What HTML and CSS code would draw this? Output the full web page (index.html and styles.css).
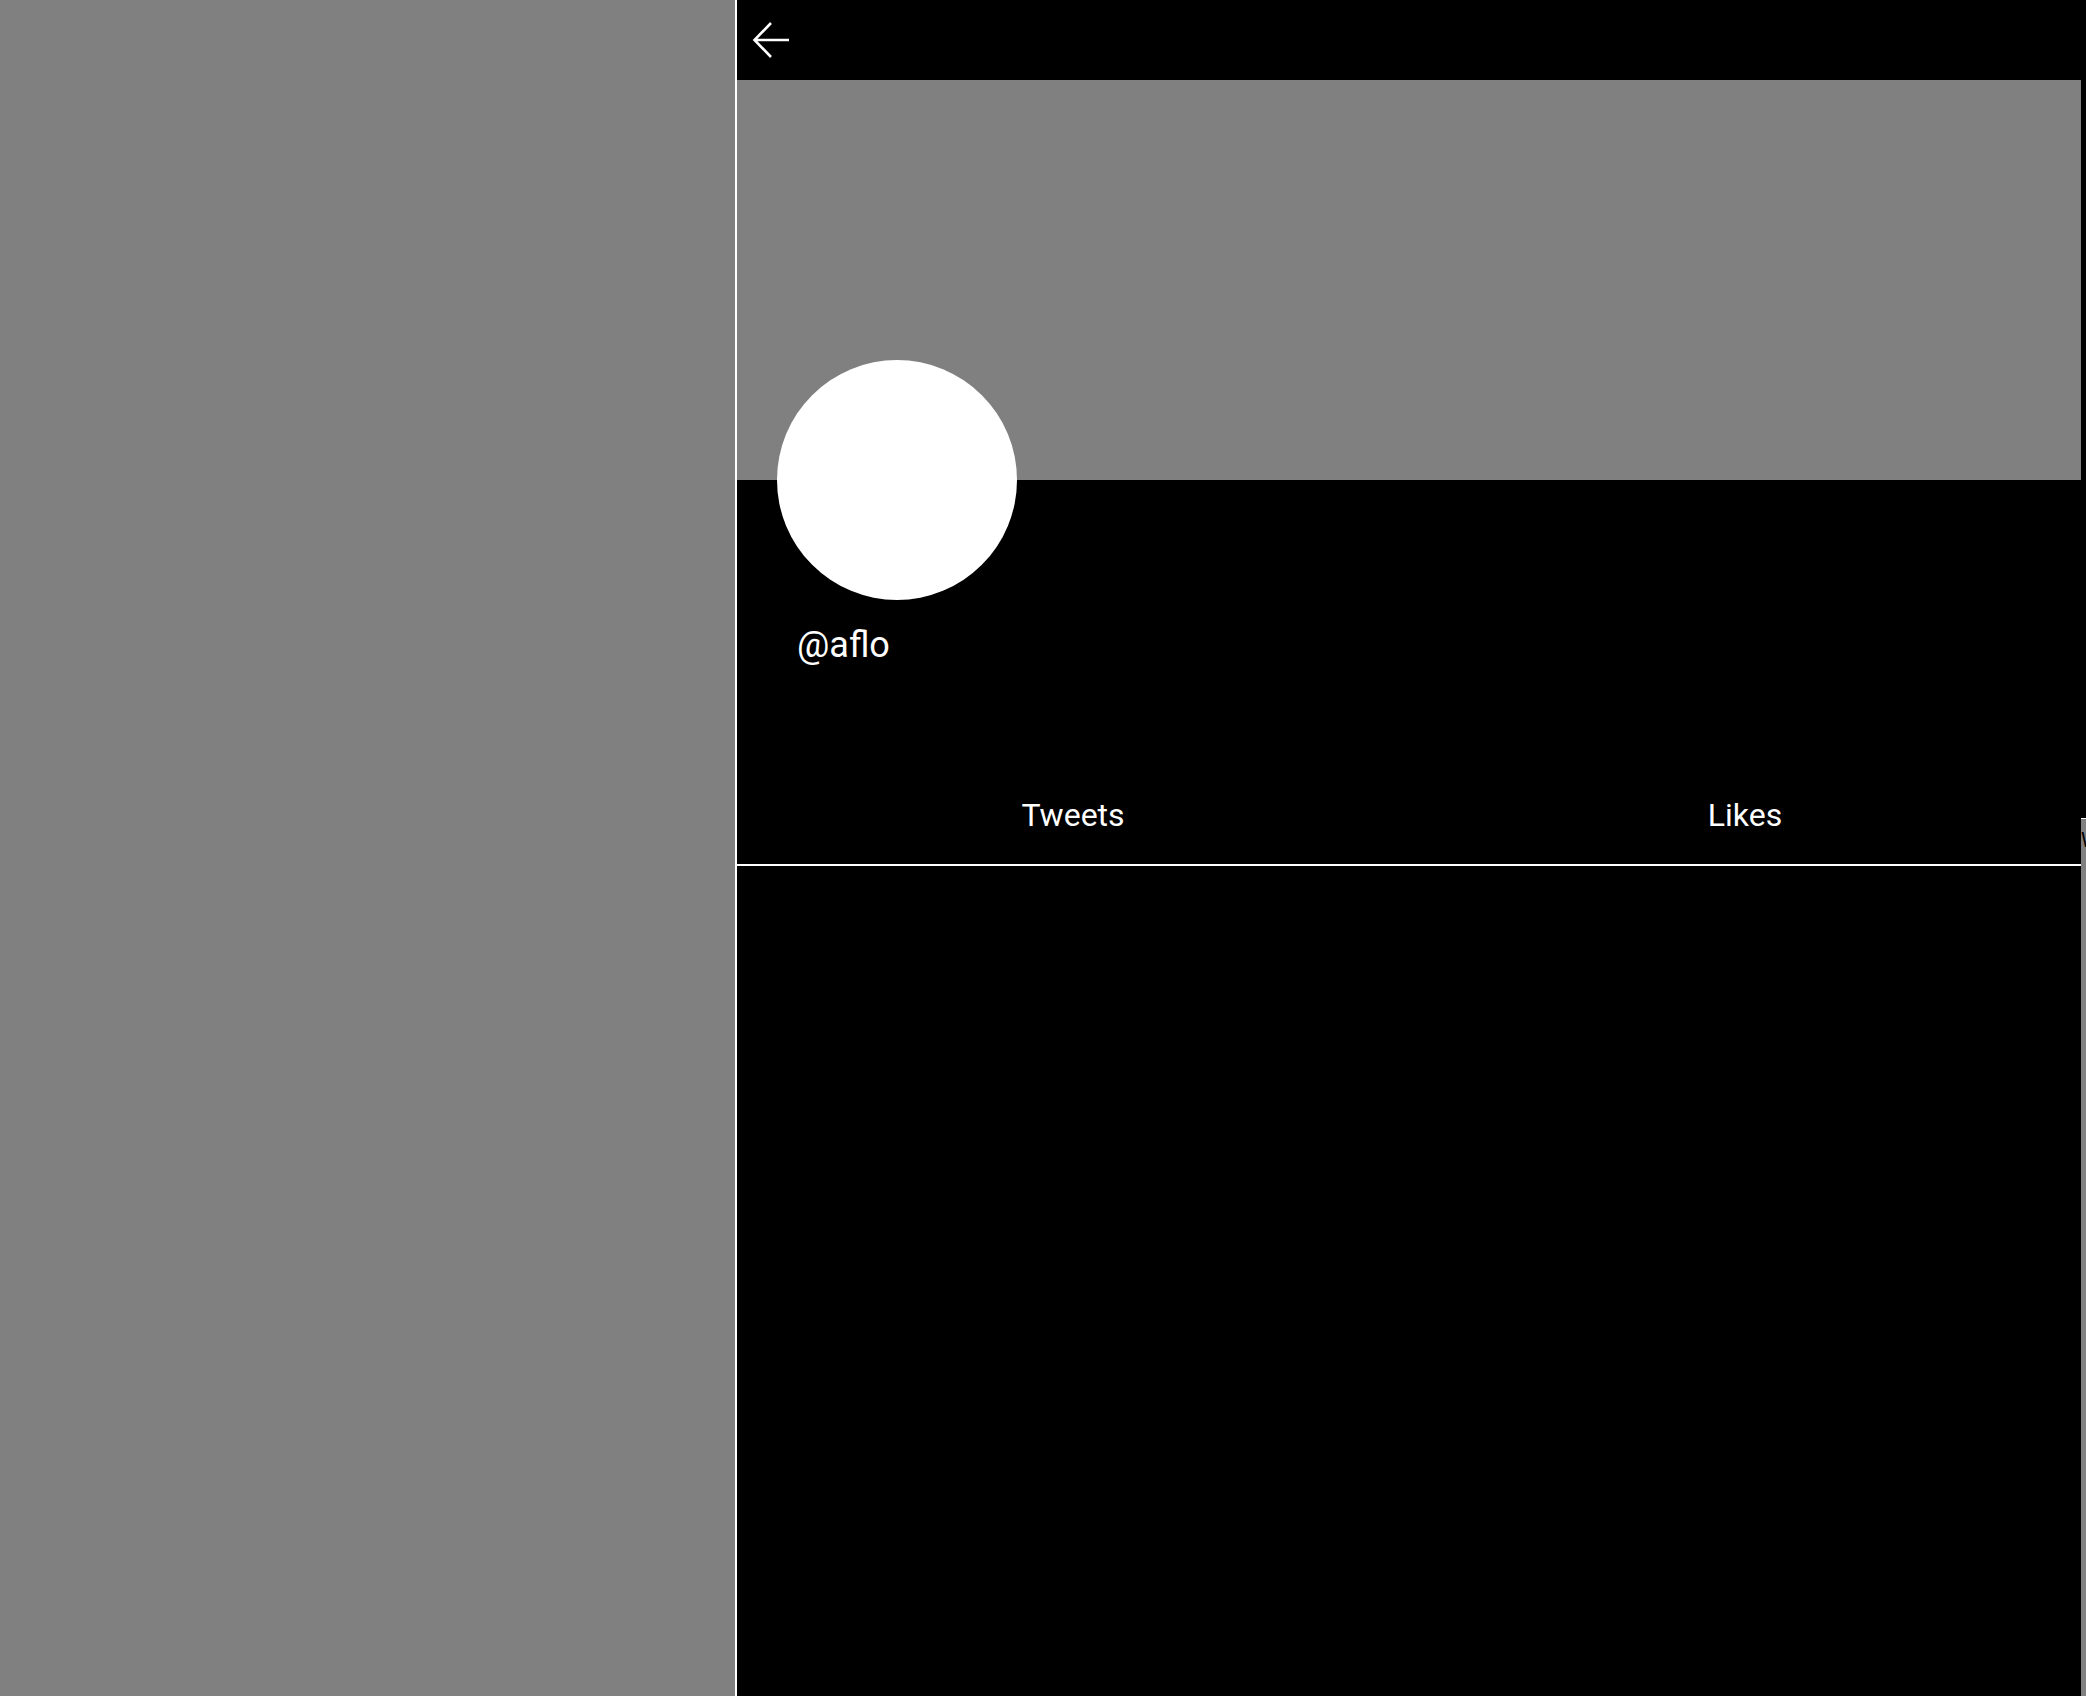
FILE: index.html
```html
<!DOCTYPE html>
<html lang="en">
<head>
<meta charset="utf-8">
<title>@aflo</title>
<link rel="stylesheet" href="styles.css">
</head>
<body>
<div class="app">
  <aside class="sidebar"></aside>
  <main class="main">
    <div class="column">
      <header class="topbar">
        <button class="back" aria-label="Back">
          <svg width="40" height="40" viewBox="0 0 40 40" fill="none" stroke="#fff" stroke-width="2.6" stroke-linecap="butt" stroke-linejoin="miter">
            <path d="M37 20 H3.5"/>
            <path d="M19 3 L2.5 20 L19 37"/>
          </svg>
        </button>
      </header>
      <div class="banner"></div>
      <div class="profile">
        <div class="avatar"></div>
        <div class="handle">@aflo</div>
      </div>
      <nav class="tabs">
        <div class="tab">Tweets</div>
        <div class="tab">Likes</div>
      </nav>
    </div>
  </main>
  <aside class="trends">
    <div class="trends-title">What's happening</div>
  </aside>
</div>
</body>
</html>
```

FILE: styles.css
```css
html, body {
  margin: 0;
  padding: 0;
  height: 100%;
  overflow: hidden;
  background: #000;
}

body {
  font-family: Roboto, "Noto Sans", "Liberation Sans", sans-serif;
  color: #fff;
}

.app {
  display: flex;
  height: 100vh;
  position: relative;
}

.sidebar {
  width: 735px;
  flex: none;
  background: #808080;
}

.main {
  flex: 1;
  background: #000;
  border-left: 2px solid #fff;
  min-width: 0;
}

.column {
  width: 1344px;
}

.topbar {
  height: 80px;
  display: flex;
  align-items: center;
  padding-left: 15px;
}

.back {
  background: none;
  border: 0;
  padding: 0;
  margin: 0;
  width: 40px;
  height: 40px;
  display: block;
  cursor: pointer;
}

.back svg {
  display: block;
}

.banner {
  height: 400px;
  background: #808080;
}

.profile {
  padding-left: 40px;
}

.avatar {
  width: 240px;
  height: 240px;
  border-radius: 50%;
  background: #fff;
  margin-top: -120px;
}

.handle {
  margin-top: 27px;
  padding-left: 20px;
  font-size: 36px;
  line-height: 36px;
}

.tabs {
  display: flex;
  margin-top: 103px;
  border-bottom: 2px solid #fff;
}

.tab {
  flex: 1;
  text-align: center;
  font-size: 32px;
  line-height: 32px;
  padding: 33px 0;
}

.trends {
  position: absolute;
  left: 2081px;
  top: 818px;
  bottom: 0;
  width: 5px;
  overflow: hidden;
  background: #808080;
  border-top: 1px solid #fff;
}

.trends-title {
  color: #000;
  font-size: 20px;
  line-height: 24px;
  padding-top: 9px;
  white-space: nowrap;
}
```
